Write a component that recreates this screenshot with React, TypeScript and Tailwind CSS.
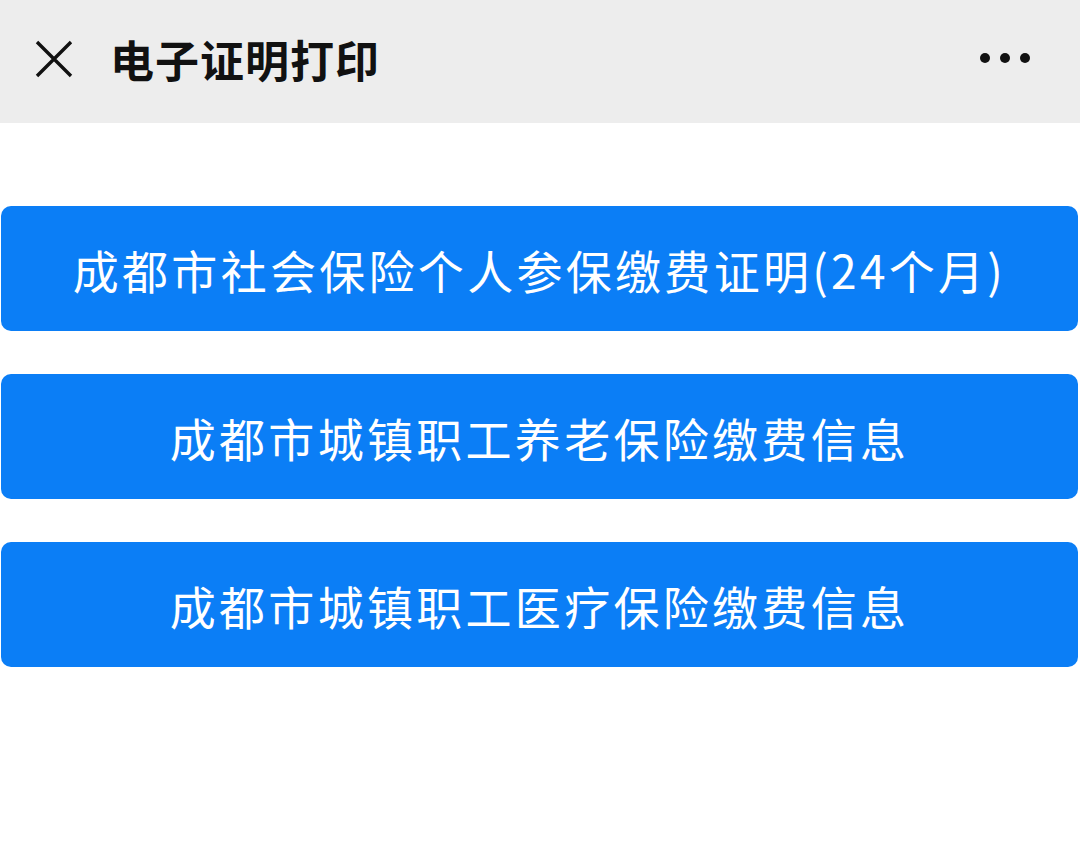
import React from "react";

const items = [
  "成都市社会保险个人参保缴费证明(24个月)",
  "成都市城镇职工养老保险缴费信息",
  "成都市城镇职工医疗保险缴费信息",
];

export default function App() {
  return (
    <div
      className="w-[1080px] h-[861px] bg-white"
      style={{ fontFamily: '"Noto Sans CJK SC", "Noto Sans", sans-serif' }}
    >
      <div className="h-[123px] bg-[#ededed] flex items-center">
        <div className="w-[110px] flex items-center pl-[34px] -mt-[6px]">
          <svg width="40" height="40" viewBox="0 0 40 40">
            <path d="M3 3 L37 37 M37 3 L3 37" stroke="#111" strokeWidth="3.4" strokeLinecap="butt" fill="none" />
          </svg>
        </div>
        <div className="flex-1 text-[44px] font-bold text-[#111] leading-none tracking-[1px] -mt-[6px]">
          电子证明打印
        </div>
        <div className="flex items-center gap-[10px] pr-[50px] -mt-[8px]">
          <span className="w-[10px] h-[10px] rounded-full bg-[#111]" />
          <span className="w-[10px] h-[10px] rounded-full bg-[#111]" />
          <span className="w-[10px] h-[10px] rounded-full bg-[#111]" />
        </div>
      </div>
      <div className="flex flex-col gap-[43px] pt-[83px] pl-[1px] pr-[2px]">
        {items.map((t) => (
          <div
            key={t}
            className="h-[125px] rounded-[10px] bg-[#0b7ef6] flex items-center justify-center text-white text-[46px] tracking-[3.3px] leading-none"
          >
            {t}
          </div>
        ))}
      </div>
    </div>
  );
}
